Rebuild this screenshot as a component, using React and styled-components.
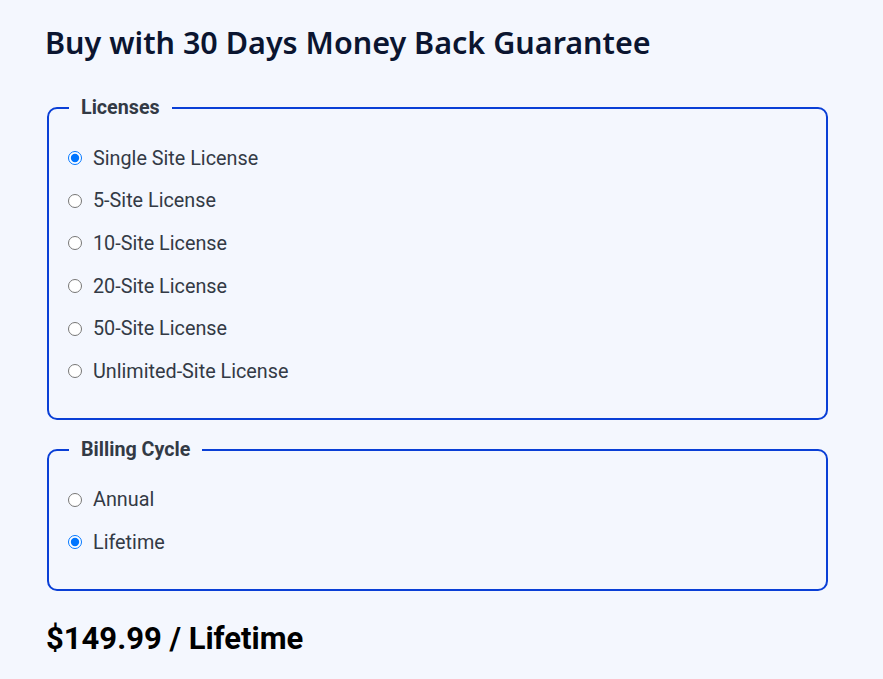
import React, { useState } from "react";
import styled, { createGlobalStyle } from "styled-components";

const GlobalStyle = createGlobalStyle`
  html, body {
    margin: 0;
    padding: 0;
    background: #f4f7fe;
  }
  body {
    font-family: Roboto, "Liberation Sans", sans-serif;
  }
`;

const licenses = [
  "Single Site License",
  "5-Site License",
  "10-Site License",
  "20-Site License",
  "50-Site License",
  "Unlimited-Site License",
];

const cycles = ["Annual", "Lifetime"];

function OptionGroup({ title, name, options, value, onChange }) {
  return (
    <Fieldset>
      <Legend>{title}</Legend>
      <Options>
        {options.map((opt) => (
          <Option key={opt}>
            <Radio
              type="radio"
              name={name}
              checked={value === opt}
              onChange={() => onChange(opt)}
            />
            <span>{opt}</span>
          </Option>
        ))}
      </Options>
    </Fieldset>
  );
}

export default function App() {
  const [license, setLicense] = useState(licenses[0]);
  const [cycle, setCycle] = useState("Lifetime");

  return (
    <>
      <GlobalStyle />
      <Page>
        <Heading>Buy with 30 Days Money Back Guarantee</Heading>
        <OptionGroup
          title="Licenses"
          name="license"
          options={licenses}
          value={license}
          onChange={setLicense}
        />
        <OptionGroup
          title="Billing Cycle"
          name="cycle"
          options={cycles}
          value={cycle}
          onChange={setCycle}
        />
        <Price>$149.99 / {cycle}</Price>
      </Page>
    </>
  );
}

const Page = styled.div`
  padding: 21px 55px 20px 47px;
  display: flex;
  flex-direction: column;
`;

const Heading = styled.h2`
  margin: 0 0 32px -2px;
  font-family: "Noto Sans", "Open Sans", sans-serif;
  font-weight: 600;
  font-size: 30.5px;
  line-height: 42px;
  color: #0b1530;
`;

const Fieldset = styled.fieldset`
  margin: 0 0 17px;
  border: 2px solid #0a3fd6;
  border-radius: 10px;
  padding: 16px 20px 25px 19px;
  min-width: 0;
`;

const Legend = styled.legend`
  margin-left: 1px;
  padding: 0 12px;
  font-weight: 700;
  font-size: 19.7px;
  line-height: 26px;
  color: #333a45;
`;

const Options = styled.div`
  display: flex;
  flex-direction: column;
`;

const Option = styled.label`
  display: flex;
  align-items: center;
  gap: 11px;
  height: 42.6px;
  font-size: 19.8px;
  color: #333a45;
  cursor: pointer;
`;

const Radio = styled.input`
  margin: 0;
  width: 14px;
  height: 14px;
  cursor: pointer;
`;

const Price = styled.div`
  margin: 12px 0 0 -1px;
  font-weight: 700;
  font-size: 31px;
  line-height: 38px;
  color: #000;
`;
